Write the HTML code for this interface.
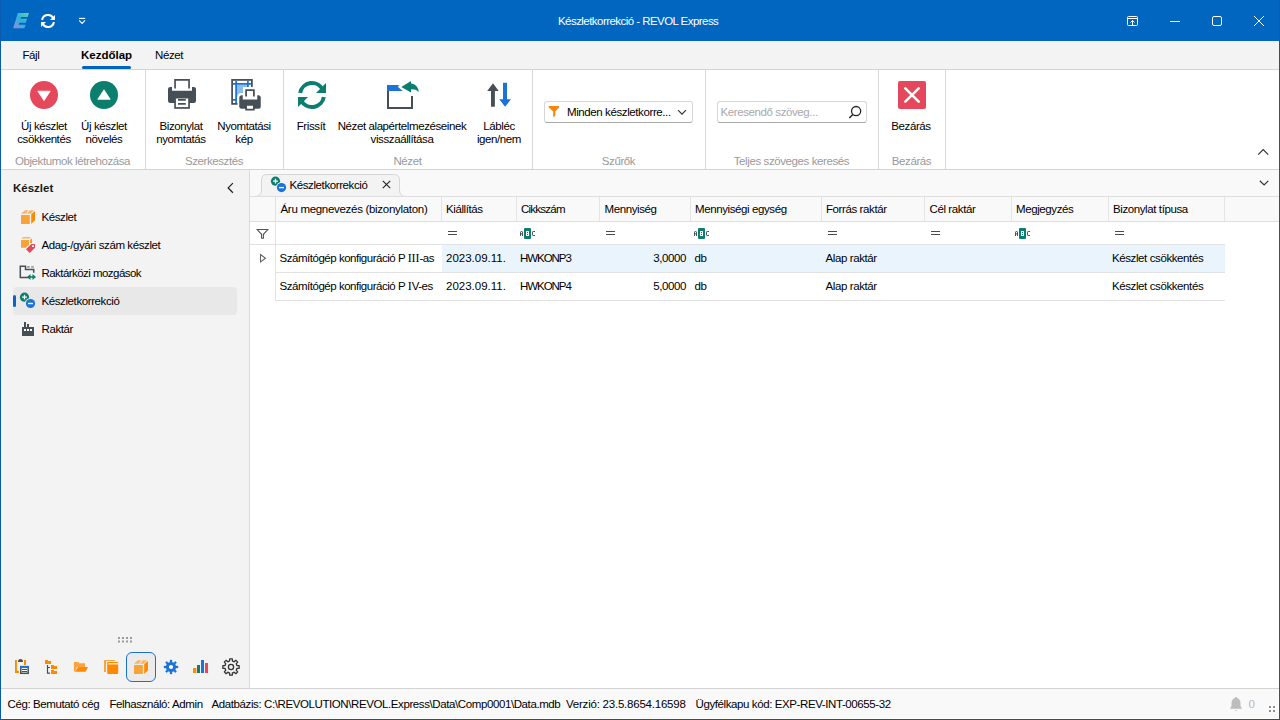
<!DOCTYPE html>
<html><head><meta charset="utf-8">
<style>
*{box-sizing:border-box;margin:0;padding:0}
html,body{width:1280px;height:720px;overflow:hidden;background:#fff}
body{font-family:"Liberation Sans",sans-serif;font-size:11.5px;line-height:13px;letter-spacing:-0.4px;color:#000;position:relative}
.a{position:absolute}
.t{position:absolute;white-space:nowrap;margin-top:1px}
svg{position:absolute;overflow:visible}
.c{text-align:center}
.gl{position:absolute;top:155px;color:#999;text-align:center;white-space:nowrap}
</style></head><body>
<!-- backgrounds -->
<div class="a" style="left:0;top:0;width:1280px;height:41px;background:#0066c0"></div>
<div class="a" style="left:1px;top:41px;width:1278px;height:28px;background:#f3f3f3"></div>
<div class="a" style="left:1px;top:69px;width:1278px;height:1px;background:#d4d4d4"></div>
<div class="a" style="left:1px;top:70px;width:1278px;height:99px;background:#fff"></div>
<div class="a" style="left:1px;top:169px;width:1278px;height:1px;background:#d4d4d4"></div>
<div class="a" style="left:1px;top:170px;width:248px;height:518px;background:#f3f3f3"></div>
<div class="a" style="left:249px;top:170px;width:1px;height:518px;background:#dadada"></div>
<div class="a" style="left:250px;top:170px;width:1029px;height:26px;background:#f9f9f9"></div>
<div class="a" style="left:250px;top:196px;width:1029px;height:492px;background:#fff"></div>
<div class="a" style="left:1px;top:688px;width:1278px;height:1px;background:#d4d4d4"></div>
<div class="a" style="left:1px;top:689px;width:1278px;height:30px;background:#f9f9f9"></div>
<!-- window border -->
<div class="a" style="left:0;top:0;width:1px;height:720px;background:#0a5bb0"></div>
<div class="a" style="left:1279px;top:0;width:1px;height:720px;background:#0a5bb0"></div>
<div class="a" style="left:0;top:719px;width:1280px;height:1px;background:#0a56a8"></div>

<!-- TITLE BAR -->
<svg style="left:13px;top:13px" width="17" height="16" viewBox="0 0 17 16">
 <defs><linearGradient id="lg" x1="1" y1="0" x2="0" y2="1"><stop offset="0" stop-color="#6fcf9c"/><stop offset="0.45" stop-color="#2ab4dc"/><stop offset="1" stop-color="#9a8ad6"/></linearGradient></defs>
 <path d="M4.8,0 H16 L14.7,3.9 H8.2 L7.6,5.8 H14 L12.7,9.8 H6.3 L5.7,11.7 H12.7 L11.3,15.3 H0.2 Z" fill="url(#lg)"/>
</svg>
<svg style="left:41px;top:14px" width="14" height="14" viewBox="0 0 28 28">
 <path d="M2.17,12 A12,12 0 0 1 24.88,8.93" fill="none" stroke="#fff" stroke-width="4"/>
 <path d="M28,2 V12 H18 Z" fill="#fff"/>
 <path d="M25.83,16 A12,12 0 0 1 3.12,19.07" fill="none" stroke="#fff" stroke-width="4"/>
 <path d="M0,26 V16 H10 Z" fill="#fff"/>
</svg>
<svg style="left:78px;top:17px" width="8" height="8" viewBox="0 0 8 8">
 <path d="M1,1.4 H7.2" stroke="#fff" stroke-width="1.1"/>
 <path d="M1.2,3.4 L4.1,6.4 L7,3.4" fill="none" stroke="#fff" stroke-width="1.1"/>
</svg>
<div class="t" style="left:558px;top:13.5px;color:#fff;letter-spacing:-0.55px">Készletkorrekció - REVOL Express</div>
<svg style="left:1126px;top:15px" width="14" height="13" viewBox="0 0 14 13">
 <rect x="1.5" y="1.5" width="10" height="9" rx="1" fill="none" stroke="#fff" stroke-width="1"/>
 <path d="M1.5,3.5 H11.5" stroke="#fff" stroke-width="1"/>
 <path d="M6.5,10.5 V5.5 M4.5,7.5 L6.5,5.5 L8.5,7.5" fill="none" stroke="#fff" stroke-width="1"/>
</svg>
<div class="a" style="left:1170px;top:21px;width:10px;height:1px;background:#fff"></div>
<svg style="left:1211px;top:15px" width="12" height="12" viewBox="0 0 12 12">
 <rect x="1.5" y="1.5" width="9" height="9" rx="1.5" fill="none" stroke="#fff" stroke-width="1"/>
</svg>
<svg style="left:1253px;top:15px" width="12" height="12" viewBox="0 0 12 12">
 <path d="M1,1 L11,11 M11,1 L1,11" stroke="#fff" stroke-width="1"/>
</svg>

<!-- MENU -->
<div class="t" style="left:22.5px;top:47.5px">Fájl</div>
<div class="t" style="left:81px;top:47.5px;font-weight:bold;font-size:11.5px;letter-spacing:0">Kezdőlap</div>
<div class="a" style="left:82px;top:66px;width:49px;height:3px;background:#0063c1;border-radius:1.5px"></div>
<div class="t" style="left:155px;top:47.5px">Nézet</div>

<!-- RIBBON -->
<div class="a" style="left:145px;top:70px;width:1px;height:99px;background:#d8d8d8"></div>
<div class="a" style="left:283px;top:70px;width:1px;height:99px;background:#d8d8d8"></div>
<div class="a" style="left:532px;top:70px;width:1px;height:99px;background:#d8d8d8"></div>
<div class="a" style="left:705px;top:70px;width:1px;height:99px;background:#d8d8d8"></div>
<div class="a" style="left:878px;top:70px;width:1px;height:99px;background:#d8d8d8"></div>
<div class="a" style="left:945px;top:70px;width:1px;height:99px;background:#d8d8d8"></div>
<div class="gl" style="left:1px;width:143px">Objektumok létrehozása</div>
<div class="gl" style="left:146px;width:136px">Szerkesztés</div>
<div class="gl" style="left:284px;width:247px">Nézet</div>
<div class="gl" style="left:533px;width:171px">Szűrők</div>
<div class="gl" style="left:706px;width:171px">Teljes szöveges keresés</div>
<div class="gl" style="left:879px;width:65px">Bezárás</div>

<!-- buttons -->
<svg style="left:30px;top:81px" width="28" height="28" viewBox="0 0 28 28">
 <circle cx="14" cy="14" r="14" fill="#e5485a"/>
 <path d="M7.8,10.2 H20.2 L14,19.6 Z" fill="#fff" stroke="#fff" stroke-width="0.8" stroke-linejoin="round"/>
</svg>
<div class="t c" style="left:4px;width:80px;top:118.7px">Új készlet<br>csökkentés</div>
<svg style="left:90px;top:81px" width="28" height="28" viewBox="0 0 28 28">
 <circle cx="14" cy="14" r="14" fill="#0b7e6e"/>
 <path d="M7.8,18.3 H20.2 L14,8.8 Z" fill="#fff" stroke="#fff" stroke-width="0.8" stroke-linejoin="round"/>
</svg>
<div class="t c" style="left:64px;width:80px;top:118.7px">Új készlet<br>növelés</div>

<svg style="left:166px;top:78px" width="32" height="32" viewBox="0 0 32 32">
 <rect x="2" y="8.9" width="28" height="16" rx="2.2" fill="#474f56"/>
 <rect x="6" y="8" width="20" height="4.75" fill="#fff"/>
 <path d="M9.05,10.6 V1.85 H23.05 V10.6" fill="none" stroke="#474f56" stroke-width="1.7"/>
 <rect x="9.05" y="19.65" width="14" height="10.3" fill="#fff" stroke="#474f56" stroke-width="1.7"/>
 <path d="M12,21.8 H19.8 M12,25.9 H19.8" stroke="#474f56" stroke-width="1.7"/>
</svg>
<div class="t c" style="left:141px;width:80px;top:118.7px">Bizonylat<br>nyomtatás</div>

<svg style="left:230px;top:78px" width="32" height="34" viewBox="0 0 32 34">
 <rect x="2.1" y="1.9" width="19.8" height="24" fill="#fff" stroke="#474f56" stroke-width="1.75"/>
 <rect x="7" y="6.5" width="10.5" height="12" fill="#8bbeec"/>
 <path d="M6.1,2.8 V25 M17.9,2.8 V14 M3,5.9 H21 M3,21.9 H6" stroke="#1a73d9" stroke-width="1.75"/>
 <path d="M13,9 H32 V34 H7.5 V19 Q7.5,15 11.5,15 H13 Z" fill="#fff"/>
 <rect x="9.25" y="17.25" width="21.5" height="13.5" rx="2.5" fill="#474f56"/>
 <rect x="12.75" y="16" width="14.5" height="5.5" fill="#fff"/>
 <path d="M16.1,18.5 V12.1 H23.9 V18.5" fill="none" stroke="#474f56" stroke-width="1.75"/>
 <rect x="16.1" y="26.9" width="7.75" height="4.75" fill="#fff" stroke="#474f56" stroke-width="1.75"/>
</svg>
<div class="t c" style="left:204px;width:80px;top:118.7px">Nyomtatási<br>kép</div>

<svg style="left:298px;top:81px" width="28" height="28" viewBox="0 0 28 28">
 <path d="M2.17,12 A12,12 0 0 1 24.88,8.93" fill="none" stroke="#0b7e6e" stroke-width="4"/>
 <path d="M28,2 V12 H18 Z" fill="#0b7e6e"/>
 <path d="M25.83,16 A12,12 0 0 1 3.12,19.07" fill="none" stroke="#0b7e6e" stroke-width="4"/>
 <path d="M0,26 V16 H10 Z" fill="#0b7e6e"/>
</svg>
<div class="t c" style="left:271px;width:80px;top:118.7px">Frissít</div>

<svg style="left:386px;top:80px" width="34" height="30" viewBox="0 0 34 30">
 <path d="M1,5 H13 L12,6.9 L16.8,10.9 H1 Z" fill="#1a73d9"/>
 <path d="M2,11 V28 H26 V16" fill="none" stroke="#474f56" stroke-width="2"/>
 <path d="M15.3,6.9 L25,1.1 V3.6 C29,3.6 32.5,7.5 32.8,12 C30.5,9.6 28,9 25,9.2 V12.6 Z" fill="#0b7e6e"/>
</svg>
<div class="t c" style="left:322px;width:160px;top:118.7px">Nézet alapértelmezéseinek<br>visszaállítása</div>

<svg style="left:486px;top:80px" width="26" height="28" viewBox="0 0 26 28">
 <path d="M7,3.3 L12.7,11 H8.9 V26.8 H5 V11 H1.2 Z" fill="#474f56"/>
 <path d="M17,2.75 H21 V19.2 H25 L19.1,26.8 L13.3,19.2 H17 Z" fill="#1a73d9"/>
</svg>
<div class="t c" style="left:459px;width:80px;top:118.7px">Lábléc<br>igen/nem</div>

<!-- combo -->
<div class="a" style="left:544px;top:101px;width:149px;height:22px;border:1px solid #d6d6d6;border-bottom-color:#a9a9a9;border-radius:3px;background:#fff"></div>
<svg style="left:548px;top:106px" width="12" height="12" viewBox="0 0 12 12">
 <path d="M0.8,0 H11 V1.6 L7.3,5.6 V9.6 L5.2,11.5 V5.6 L0.8,1.6 Z" fill="#f7860b"/>
</svg>
<div class="t" style="left:567px;top:104.5px">Minden készletkorre...</div>
<svg style="left:677px;top:108px" width="10" height="8" viewBox="0 0 10 8">
 <path d="M1,2.2 L5,6.2 L9,2.2" fill="none" stroke="#333" stroke-width="1.2"/>
</svg>
<!-- search -->
<div class="a" style="left:717px;top:101px;width:150px;height:22px;border:1px solid #d6d6d6;border-bottom-color:#a9a9a9;border-radius:3px;background:#fff"></div>
<div class="t" style="left:720.5px;top:104.5px;color:#a9a9a9">Keresendő szöveg...</div>
<svg style="left:846px;top:104px" width="18" height="16" viewBox="0 0 18 16">
 <circle cx="10.1" cy="7.1" r="4.6" fill="none" stroke="#222" stroke-width="1.3"/>
 <path d="M6.8,10.4 L3.3,13.9" stroke="#222" stroke-width="1.4"/>
</svg>
<!-- close -->
<svg style="left:898px;top:81px" width="28" height="28" viewBox="0 0 28 28">
 <rect x="0" y="0" width="28" height="28" rx="2" fill="#e5485a"/>
 <path d="M7.3,7.3 L20.7,20.7 M20.7,7.3 L7.3,20.7" stroke="#fff" stroke-width="2.6" stroke-linecap="round"/>
</svg>
<div class="t c" style="left:871px;width:80px;top:118.9px">Bezárás</div>
<svg style="left:1256px;top:147px" width="14" height="10" viewBox="0 0 14 10">
 <path d="M2.2,7.7 L7.2,2.7 L12.2,7.7" fill="none" stroke="#333" stroke-width="1.2"/>
</svg>
<!-- LEFT PANEL -->
<div class="t" style="left:13px;top:180.5px;font-weight:bold;font-size:11.5px;letter-spacing:0;color:#1a1a1a">Készlet</div>
<svg style="left:225px;top:181px" width="10" height="14" viewBox="0 0 10 14">
 <path d="M7.9,2.1 L3.2,6.9 L7.9,11.7" fill="none" stroke="#222" stroke-width="1.3"/>
</svg>
<div class="a" style="left:13px;top:287px;width:224px;height:28px;background:#e8e8e8;border-radius:4px"></div>
<div class="a" style="left:13px;top:295px;width:3px;height:12px;background:#0f62c4;border-radius:1.5px"></div>

<svg style="left:20px;top:208px" width="16" height="17" viewBox="0 0 16 17">
 <path d="M1,7 H9.8 V16 H1 Z" fill="#f9a23a"/>
 <path d="M1,5.7 H6 L8.3,2.2 H4.8 Z M7,5.7 H10.7 L14,2.2 H9.8 Z" fill="#fbb462"/>
 <path d="M11.2,6 L15,3 V12.3 L11.2,16 Z" fill="#ff8a00"/>
</svg>
<div class="t" style="left:41.5px;top:209.9px">Készlet</div>

<svg style="left:20px;top:236px" width="16" height="18" viewBox="0 0 16 18">
 <path d="M1,4 H9 V9 L5.5,11.7 H1 Z" fill="#f9a23a"/>
 <path d="M1.2,2.5 L3,1 H10.7 L9.7,2.5 Z" fill="#fbb462"/>
 <path d="M10.2,4 L11.7,2.2 L12,6.7 L10.3,7.2 Z" fill="#ff8a00"/>
 <path d="M6,13.3 L11.3,8 H15 V11.7 L9.7,17 Z" fill="#e5485a"/>
 <rect x="12" y="9.3" width="2" height="1.7" fill="#fff"/>
</svg>
<div class="t" style="left:41.5px;top:237.9px">Adag-/gyári szám készlet</div>

<svg style="left:19px;top:265px" width="18" height="16" viewBox="0 0 18 16">
 <path d="M11,12.5 H1.3 V1.3 H6.5 V4.5 H14.7 V7.7" fill="none" stroke="#474f56" stroke-width="1.5"/>
 <rect x="8" y="1.2" width="2.7" height="1.5" fill="#8e8e8e"/>
 <rect x="12.2" y="1.2" width="2.6" height="1.5" fill="#8e8e8e"/>
 <path d="M8,12 L11.5,9 V15 Z M17,12 L13.5,9 V15 Z" fill="#0b7e6e"/>
 <rect x="11" y="11.2" width="3" height="1.6" fill="#0b7e6e"/>
</svg>
<div class="t" style="left:41.5px;top:265.9px;letter-spacing:-0.55px">Raktárközi mozgások</div>

<svg style="left:19px;top:291px" width="18" height="18" viewBox="0 0 18 18">
 <circle cx="5.5" cy="6.2" r="4.6" fill="#0b7e6e"/>
 <path d="M3.1,6.2 H7.9 M5.5,3.8 V8.6" stroke="#fff" stroke-width="1.3"/>
 <circle cx="11.5" cy="12.5" r="5.6" fill="#e8e8e8"/>
 <circle cx="11.5" cy="12.5" r="4.6" fill="#1a73d9"/>
 <path d="M9,12.5 H14" stroke="#fff" stroke-width="1.4"/>
</svg>
<div class="t" style="left:41.5px;top:293.9px">Készletkorrekció</div>

<svg style="left:20px;top:320px" width="16" height="17" viewBox="0 0 16 17">
 <path d="M2,7 H4 V2 H6 V7 H7 V4 H9 V7 H14 V16 H2 Z" fill="#474f56"/>
 <rect x="4" y="9" width="2" height="2" fill="#fff"/>
 <rect x="7" y="9" width="2" height="2" fill="#fff"/>
 <rect x="10" y="9" width="2" height="2" fill="#fff"/>
</svg>
<div class="t" style="left:41.5px;top:321.9px">Raktár</div>

<!-- grip -->
<svg style="left:117px;top:636px" width="16" height="6" viewBox="0 0 16 6">
 <g fill="#9a9a9a"><rect x="1" y="1" width="2" height="2"/><rect x="5" y="1" width="2" height="2"/><rect x="9" y="1" width="2" height="2"/><rect x="13" y="1" width="2" height="2"/>
 <rect x="1" y="4.5" width="2" height="2"/><rect x="5" y="4.5" width="2" height="2"/><rect x="9" y="4.5" width="2" height="2"/><rect x="13" y="4.5" width="2" height="2"/></g>
</svg>
<!-- bottom icons -->
<svg style="left:12px;top:655px" width="20" height="21" viewBox="0 0 20 21">
 <path d="M3,5 H4.9 V15.75 H6.9 V18 H3 Z M12,5 H14 V10 H12 Z" fill="#ff8a00"/>
 <path d="M6,7 Q6,4 8.5,4 Q11,4 11,7 Z" fill="#474f56"/>
 <rect x="8" y="11" width="9" height="8" fill="#fff"/>
 <rect x="8.8" y="11.7" width="7.4" height="6.6" fill="none" stroke="#474f56" stroke-width="1.5"/>
 <rect x="8" y="10.9" width="9" height="2.2" fill="#1a73d9"/>
 <path d="M10,14.5 H15 M10,16.5 H15" stroke="#474f56" stroke-width="1.1"/>
</svg>
<svg style="left:44px;top:658px" width="15" height="17" viewBox="0 0 15 17">
 <path d="M1,2 H4 V3 H7 V6 H1 Z M7,7 H10 V8 H13 V11 H7 Z M7,12 H10 V13 H13 V16 H7 Z" fill="#ff8a00"/>
 <path d="M3.5,7 V15.2 H6 M3.5,9.5 H6" fill="none" stroke="#474f56" stroke-width="1.2"/>
</svg>
<svg style="left:72px;top:660px" width="18" height="14" viewBox="0 0 18 14">
 <path d="M1.9,1.9 H6.8 V3.2 H13 V7 H5 L3,11.5 H1.9 Z" fill="#fba33f"/>
 <path d="M3,11.7 L6.1,7 H16.1 L13.6,11.7 Z" fill="#ff8a00"/>
</svg>
<svg style="left:102px;top:658px" width="18" height="17" viewBox="0 0 18 17">
 <path d="M2,3 Q2,1.9 3,1.9 H12.9 V3 H4 V13.9 H2 Z" fill="#fba33f"/>
 <rect x="5.2" y="3.9" width="11" height="12" rx="1" fill="#ff8a00"/>
 <rect x="6.3" y="5.2" width="9.9" height="1.2" fill="#fff"/>
</svg>
<div class="a" style="left:126px;top:652px;width:30px;height:30px;border:1.5px solid #1a6fd0;border-radius:6px;background:#ebebeb"></div>
<svg style="left:132.8px;top:657.7px" width="16" height="17" viewBox="0 0 16 17">
 <path d="M1,7 H9.8 V16 H1 Z" fill="#f9a23a"/>
 <path d="M1,5.7 H6 L8.3,2.2 H4.8 Z M7,5.7 H10.7 L14,2.2 H9.8 Z" fill="#fbb462"/>
 <path d="M11.2,6 L15,3 V12.3 L11.2,16 Z" fill="#ff8a00"/>
</svg>
<svg style="left:163px;top:659px" width="16" height="16" viewBox="0 0 16 16">
 <path d="M12.62,6.09 L12.91,7.06 L15.03,7.00 L15.03,9.00 L12.91,8.94 L12.62,9.91 L12.14,10.81 L13.68,12.26 L12.26,13.68 L10.81,12.14 L9.91,12.62 L8.94,12.91 L9.00,15.03 L7.00,15.03 L7.06,12.91 L6.09,12.62 L5.19,12.14 L3.74,13.68 L2.32,12.26 L3.86,10.81 L3.38,9.91 L3.09,8.94 L0.97,9.00 L0.97,7.00 L3.09,7.06 L3.38,6.09 L3.86,5.19 L2.32,3.74 L3.74,2.32 L5.19,3.86 L6.09,3.38 L7.06,3.09 L7.00,0.97 L9.00,0.97 L8.94,3.09 L9.91,3.38 L10.81,3.86 L12.26,2.32 L13.68,3.74 L12.14,5.19 Z" fill="#1a73d9" stroke="#1a73d9" stroke-width="0.3" stroke-linejoin="round"/>
 <circle cx="8" cy="8" r="2.1" fill="#fff"/>
</svg>
<svg style="left:192px;top:659px" width="18" height="16" viewBox="0 0 18 16">
 <rect x="1" y="9" width="3.3" height="5" fill="#ff8a00"/>
 <rect x="5" y="6" width="3" height="8" fill="#0b7e6e"/>
 <rect x="9" y="1" width="3" height="13" fill="#1a73d9"/>
 <rect x="13" y="4" width="3" height="10" fill="#e5485a"/>
</svg>
<svg style="left:221.2px;top:656.9px" width="20" height="20" viewBox="0 0 20 20">
 <path d="M15.64,7.67 L15.93,8.58 L18.15,8.71 L18.15,11.29 L15.93,11.42 L15.64,12.33 L15.20,13.19 L16.67,14.85 L14.85,16.67 L13.19,15.20 L12.33,15.64 L11.42,15.93 L11.29,18.15 L8.71,18.15 L8.58,15.93 L7.67,15.64 L6.81,15.20 L5.15,16.67 L3.33,14.85 L4.80,13.19 L4.36,12.33 L4.07,11.42 L1.85,11.29 L1.85,8.71 L4.07,8.58 L4.36,7.67 L4.80,6.81 L3.33,5.15 L5.15,3.33 L6.81,4.80 L7.67,4.36 L8.58,4.07 L8.71,1.85 L11.29,1.85 L11.42,4.07 L12.33,4.36 L13.19,4.80 L14.85,3.33 L16.67,5.15 L15.20,6.81 Z" fill="none" stroke="#333" stroke-width="1.3" stroke-linejoin="round"/>
 <circle cx="10" cy="10" r="2.6" fill="none" stroke="#333" stroke-width="1.3"/>
</svg>
<!-- DOC TAB -->
<svg style="left:250px;top:170px" width="160" height="27" viewBox="0 0 160 27">
 <path d="M0,26.5 H5 Q11.5,26.5 11.5,20 V10 Q11.5,4.5 17,4.5 H143.5 Q149.5,4.5 149.5,10 V20 Q149.5,26.5 156,26.5 H160" fill="#f3f3f3" stroke="#d6d6d6" stroke-width="1"/>
 <path d="M11.5,26.5 H149.5" stroke="#f3f3f3" stroke-width="1"/>
</svg>
<svg style="left:269px;top:175px" width="19" height="19" viewBox="0 0 19 19">
 <circle cx="6.5" cy="6.2" r="4.6" fill="#0b7e6e"/>
 <path d="M4.1,6.2 H8.9 M6.5,3.8 V8.6" stroke="#fff" stroke-width="1.3"/>
 <circle cx="12.5" cy="12.6" r="5.6" fill="#f3f3f3"/>
 <circle cx="12.5" cy="12.6" r="4.6" fill="#1a73d9"/>
 <path d="M10,12.6 H15" stroke="#fff" stroke-width="1.4"/>
</svg>
<div class="t" style="left:289.5px;top:178px">Készletkorrekció</div>
<svg style="left:381px;top:179px" width="11" height="11" viewBox="0 0 11 11">
 <path d="M1.8,1.8 L9.2,9.2 M9.2,1.8 L1.8,9.2" stroke="#222" stroke-width="1.1"/>
</svg>
<svg style="left:1256px;top:178px" width="14" height="10" viewBox="0 0 14 10">
 <path d="M3.8,2.8 L8.1,7 L12.3,2.8" fill="none" stroke="#333" stroke-width="1.2"/>
</svg>

<!-- GRID -->
<div class="a" style="left:250px;top:196px;width:1029px;height:1px;background:#dedede"></div>
<div class="a" style="left:250px;top:197px;width:1029px;height:24px;background:#f9f9f9"></div>
<div class="a" style="left:250px;top:221px;width:1029px;height:1px;background:#dedede"></div>
<div class="a" style="left:250px;top:244px;width:975px;height:1px;background:#e2e2e2"></div>
<div class="a" style="left:442px;top:245px;width:783px;height:27px;background:#eaf4fd"></div>
<div class="a" style="left:276px;top:272px;width:949px;height:1px;background:#e2e2e2"></div>
<div class="a" style="left:276px;top:300px;width:949px;height:1px;background:#e2e2e2"></div>
<div class="a" style="left:275px;top:197px;width:1px;height:104px;background:#e2e2e2"></div>
<div class="a" style="left:441px;top:197px;width:1px;height:24px;background:#e4e4e4"></div>
<div class="a" style="left:516px;top:197px;width:1px;height:24px;background:#e4e4e4"></div>
<div class="a" style="left:599px;top:197px;width:1px;height:24px;background:#e4e4e4"></div>
<div class="a" style="left:690px;top:197px;width:1px;height:24px;background:#e4e4e4"></div>
<div class="a" style="left:821px;top:197px;width:1px;height:24px;background:#e4e4e4"></div>
<div class="a" style="left:924px;top:197px;width:1px;height:24px;background:#e4e4e4"></div>
<div class="a" style="left:1011px;top:197px;width:1px;height:24px;background:#e4e4e4"></div>
<div class="a" style="left:1108px;top:197px;width:1px;height:24px;background:#e4e4e4"></div>
<div class="a" style="left:1224px;top:197px;width:1px;height:24px;background:#e4e4e4"></div>

<div class="t" style="left:280.5px;top:202px;letter-spacing:-0.3px">Áru megnevezés (bizonylaton)</div>
<div class="t" style="left:446px;top:202px">Kiállítás</div>
<div class="t" style="left:521px;top:202px;letter-spacing:-0.75px">Cikkszám</div>
<div class="t" style="left:604.5px;top:202px">Mennyiség</div>
<div class="t" style="left:695px;top:202px">Mennyiségi egység</div>
<div class="t" style="left:826px;top:202px">Forrás raktár</div>
<div class="t" style="left:929.5px;top:202px">Cél raktár</div>
<div class="t" style="left:1016px;top:202px">Megjegyzés</div>
<div class="t" style="left:1113px;top:202px">Bizonylat típusa</div>

<svg style="left:255px;top:227px" width="15" height="14" viewBox="0 0 15 14">
 <path d="M2.2,2.5 H12.8 L8.4,7.3 V11.2 H6.6 V7.3 Z" fill="none" stroke="#555" stroke-width="1.1" stroke-linejoin="miter"/>
</svg>
<svg style="left:446px;top:229px" width="12" height="8" viewBox="0 0 12 8">
 <path d="M2,2.5 H11 M2,5.5 H11" stroke="#4a4a4a" stroke-width="1"/>
</svg>
<svg style="left:604px;top:229px" width="12" height="8" viewBox="0 0 12 8"><path d="M2,2.5 H11 M2,5.5 H11" stroke="#4a4a4a" stroke-width="1"/></svg>
<svg style="left:826px;top:229px" width="12" height="8" viewBox="0 0 12 8"><path d="M2,2.5 H11 M2,5.5 H11" stroke="#4a4a4a" stroke-width="1"/></svg>
<svg style="left:929px;top:229px" width="12" height="8" viewBox="0 0 12 8"><path d="M2,2.5 H11 M2,5.5 H11" stroke="#4a4a4a" stroke-width="1"/></svg>
<svg style="left:1113px;top:229px" width="12" height="8" viewBox="0 0 12 8"><path d="M2,2.5 H11 M2,5.5 H11" stroke="#4a4a4a" stroke-width="1"/></svg>
<svg style="left:519px;top:227px" width="18" height="13" viewBox="0 0 18 13">
 <rect x="5" y="1" width="7" height="11" rx="1" fill="#0b7e6e"/>
 <rect x="7" y="4" width="3" height="5" fill="#fff"/>
 <rect x="8" y="5" width="1" height="1" fill="#0b7e6e"/><rect x="8" y="7" width="1" height="1" fill="#0b7e6e"/>
 <path d="M1.5,9 V5.2 Q1.5,4.5 2.5,4.5 Q3.5,4.5 3.5,5.2 V9 M1.5,6.8 H3.5" fill="none" stroke="#474f56" stroke-width="1"/>
 <path d="M16,4.5 H14.2 Q13.5,4.5 13.5,5.2 V7.8 Q13.5,8.5 14.2,8.5 H16" fill="none" stroke="#474f56" stroke-width="1"/>
</svg>
<svg style="left:693px;top:227px" width="18" height="13" viewBox="0 0 18 13">
 <rect x="5" y="1" width="7" height="11" rx="1" fill="#0b7e6e"/>
 <rect x="7" y="4" width="3" height="5" fill="#fff"/>
 <rect x="8" y="5" width="1" height="1" fill="#0b7e6e"/><rect x="8" y="7" width="1" height="1" fill="#0b7e6e"/>
 <path d="M1.5,9 V5.2 Q1.5,4.5 2.5,4.5 Q3.5,4.5 3.5,5.2 V9 M1.5,6.8 H3.5" fill="none" stroke="#474f56" stroke-width="1"/>
 <path d="M16,4.5 H14.2 Q13.5,4.5 13.5,5.2 V7.8 Q13.5,8.5 14.2,8.5 H16" fill="none" stroke="#474f56" stroke-width="1"/>
</svg>
<svg style="left:1014px;top:227px" width="18" height="13" viewBox="0 0 18 13">
 <rect x="5" y="1" width="7" height="11" rx="1" fill="#0b7e6e"/>
 <rect x="7" y="4" width="3" height="5" fill="#fff"/>
 <rect x="8" y="5" width="1" height="1" fill="#0b7e6e"/><rect x="8" y="7" width="1" height="1" fill="#0b7e6e"/>
 <path d="M1.5,9 V5.2 Q1.5,4.5 2.5,4.5 Q3.5,4.5 3.5,5.2 V9 M1.5,6.8 H3.5" fill="none" stroke="#474f56" stroke-width="1"/>
 <path d="M16,4.5 H14.2 Q13.5,4.5 13.5,5.2 V7.8 Q13.5,8.5 14.2,8.5 H16" fill="none" stroke="#474f56" stroke-width="1"/>
</svg>

<svg style="left:258px;top:252px" width="10" height="13" viewBox="0 0 10 13">
 <path d="M2.5,2.5 L7.5,6.2 L2.5,10 Z" fill="none" stroke="#666" stroke-width="1.1" stroke-linejoin="miter"/>
</svg>

<div class="t" style="left:279.5px;top:251px;letter-spacing:-0.47px">Számítógép konfiguráció P <span style="font-family:'Liberation Serif';font-size:12px;letter-spacing:-0.1px">III</span>-as</div>
<div class="t" style="left:446px;top:251px;letter-spacing:0">2023.09.11.</div>
<div class="t" style="left:520px;top:251px;letter-spacing:-1.05px">HWKONP3</div>
<div class="t" style="left:600px;top:251px;width:86px;text-align:right">3,0000</div>
<div class="t" style="left:694.5px;top:251px">db</div>
<div class="t" style="left:825.5px;top:251px">Alap raktár</div>
<div class="t" style="left:1112px;top:251px">Készlet csökkentés</div>

<div class="t" style="left:279.5px;top:279px;letter-spacing:-0.47px">Számítógép konfiguráció P <span style="font-family:'Liberation Serif';font-size:12px;letter-spacing:-0.1px">I</span>V-es</div>
<div class="t" style="left:446px;top:279px;letter-spacing:0">2023.09.11.</div>
<div class="t" style="left:520px;top:279px;letter-spacing:-1.05px">HWKONP4</div>
<div class="t" style="left:600px;top:279px;width:86px;text-align:right">5,0000</div>
<div class="t" style="left:694.5px;top:279px">db</div>
<div class="t" style="left:825.5px;top:279px">Alap raktár</div>
<div class="t" style="left:1112px;top:279px">Készlet csökkentés</div>

<!-- STATUS -->
<div class="a" style="left:1278px;top:689px;width:1px;height:30px;background:#fff"></div>
<div class="a" style="left:1px;top:718px;width:1278px;height:1px;background:#fff"></div>
<div class="t" style="left:7.5px;top:697px">Cég: Bemutató cég</div>
<div class="t" style="left:109.5px;top:697px">Felhasználó: Admin</div>
<div class="t" style="left:211.5px;top:697px">Adatbázis: C:\REVOLUTION\REVOL.Express\Data\Comp0001\Data.mdb</div>
<div class="t" style="left:566px;top:697px;letter-spacing:-0.22px">Verzió: 23.5.8654.16598</div>
<div class="t" style="left:695.5px;top:697px">Ügyfélkapu kód: EXP-REV-INT-00655-32</div>
<svg style="left:1229px;top:696px" width="14" height="16" viewBox="0 0 14 16">
 <path d="M7,1 Q8.2,1 8.2,2 Q11.5,3 11.5,7.5 V10 L13,12.8 H1 L2.5,10 V7.5 Q2.5,3 5.8,2 Q5.8,1 7,1 Z" fill="#bdbdbd"/>
 <rect x="6.3" y="14" width="1.6" height="0.9" fill="#bdbdbd"/>
</svg>
<div class="t" style="left:1248.5px;top:697px;color:#b8b8c8">0</div>
<svg style="left:1268px;top:705px" width="8" height="8" viewBox="0 0 8 8">
 <g fill="#8e8e8e"><rect x="1" y="1" width="2" height="2"/><rect x="5" y="1" width="2" height="2"/><rect x="1" y="5" width="2" height="2"/><rect x="5" y="5" width="2" height="2"/></g>
</svg>
</body></html>
